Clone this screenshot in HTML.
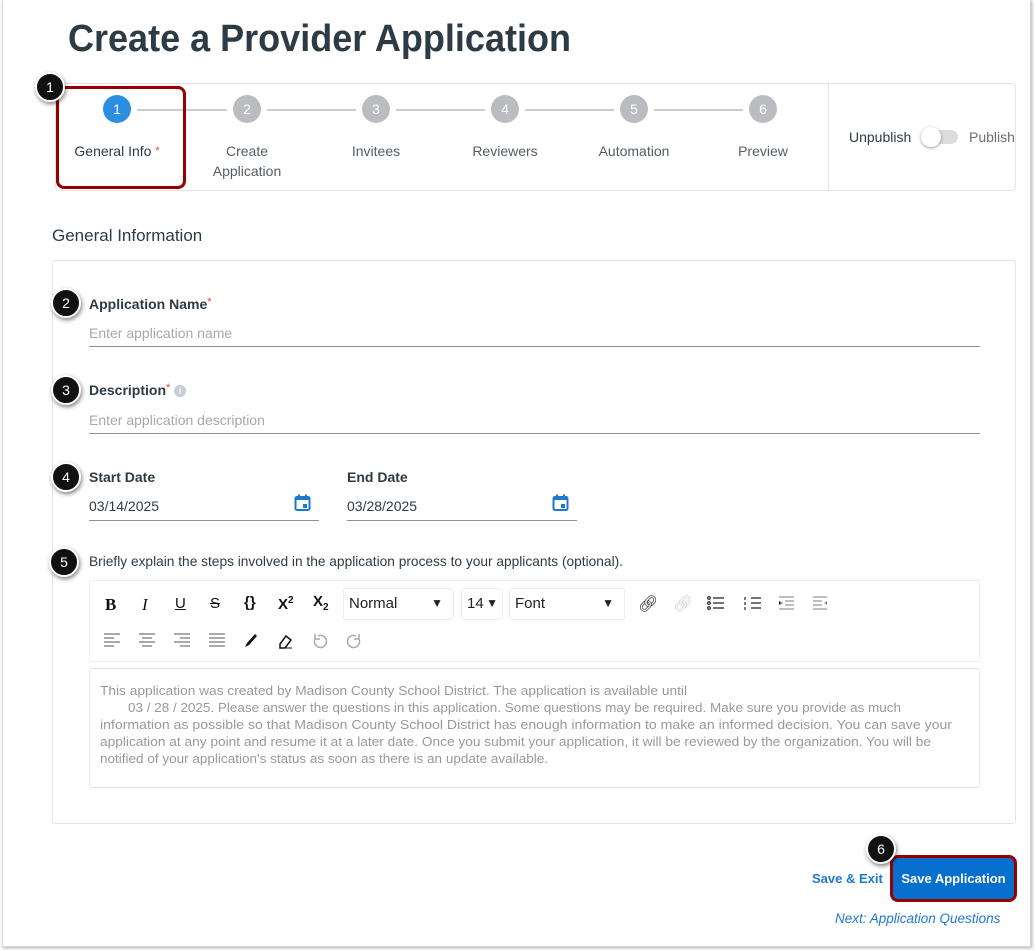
<!DOCTYPE html>
<html><head><meta charset="utf-8"><style>
*{box-sizing:border-box;margin:0;padding:0}
body{width:1036px;height:951px;background:#fff;font-family:"Liberation Sans",sans-serif;color:#2d3b45;position:relative;overflow:hidden}
.a{position:absolute;white-space:nowrap}
.frame{position:absolute;left:2px;top:0;width:1029px;height:947px;border:1px solid #d8d8d8;border-top:none;box-shadow:1px 1px 3px rgba(0,0,0,.35)}
.badge{position:absolute;width:30px;height:30px;border-radius:50%;background:#111;color:#fff;font-size:14px;text-align:center;line-height:26px;border:2px solid #fff;box-shadow:1px 2px 4px rgba(0,0,0,.5)}
.step{position:absolute;top:95px;width:28px;height:28px;border-radius:50%;background:#bbbcc0;color:#fff;font-size:14px;text-align:center;line-height:28px}
.sl{position:absolute;top:141px;font-size:14px;color:#555d63;text-align:center;width:120px;line-height:20px}
.line{position:absolute;top:109px;height:2px;background:#c7cdd1}
.lab{position:absolute;font-size:14px;font-weight:bold;color:#2d3b45}
.ph{position:absolute;font-size:14px;color:#a5a9ad}
.ul{position:absolute;height:1px;background:#8b9196}
.tb{position:absolute;font-size:15px;color:#111}
.sel{position:absolute;top:588px;height:32px;border:1px solid #eee;border-radius:3px;font-size:15px;padding:6px 5px;color:#222}
.sel i{position:absolute;right:10px;top:7px;font-style:normal;font-size:12px}
</style></head><body>
<div class="frame"></div>
<svg class="a" style="left:0;top:0" width="1036" height="70"><text x="68" y="51" font-family="Liberation Sans" font-weight="bold" font-size="38" fill="#2d3b45" textLength="503" lengthAdjust="spacingAndGlyphs">Create a Provider Application</text></svg>

<div class="a" style="left:55px;top:83px;width:961px;height:108px;border:1px solid #e2e4e6;border-radius:4px"></div>
<div class="a" style="left:828px;top:84px;width:1px;height:106px;background:#e2e4e6"></div>
<div class="line" style="left:137px;width:90px"></div>
<div class="line" style="left:267px;width:89px"></div>
<div class="line" style="left:396px;width:89px"></div>
<div class="line" style="left:525px;width:89px"></div>
<div class="line" style="left:654px;width:89px"></div>
<div class="step" style="left:103px;background:#2b8ee0">1</div>
<div class="step" style="left:233px">2</div>
<div class="step" style="left:362px">3</div>
<div class="step" style="left:491px">4</div>
<div class="step" style="left:620px">5</div>
<div class="step" style="left:749px">6</div>
<div class="sl" style="left:57px;color:#2d3b45">General Info <span style="color:#e0472c;font-size:11px;vertical-align:top">*</span></div>
<div class="sl" style="left:187px">Create<br>Application</div>
<div class="sl" style="left:316px">Invitees</div>
<div class="sl" style="left:445px">Reviewers</div>
<div class="sl" style="left:574px">Automation</div>
<div class="sl" style="left:703px">Preview</div>
<div class="a" style="left:56px;top:86px;width:130px;height:103px;border:3px solid #960000;border-radius:8px"></div>
<div class="a" style="left:849px;top:129px;font-size:14px;color:#2d3b45">Unpublish</div>
<div class="a" style="left:924px;top:130px;width:34px;height:14px;border-radius:7px;background:#dcdcdc"></div>
<div class="a" style="left:921px;top:127px;width:20px;height:20px;border-radius:50%;background:#fff;box-shadow:0 1px 3px rgba(0,0,0,.4)"></div>
<div class="a" style="left:969px;top:129px;font-size:14px;color:#6b7075">Publish</div>

<div class="a" style="left:52px;top:226px;font-size:17px;color:#2d3b45">General Information</div>
<div class="a" style="left:52px;top:260px;width:964px;height:564px;border:1px solid #e2e4e6;border-radius:3px"></div>

<div class="lab" style="left:89px;top:296px">Application Name<span style="color:#e0472c;font-weight:normal;font-size:11px;vertical-align:top">*</span></div>
<div class="ph" style="left:89px;top:325px">Enter application name</div>
<div class="ul" style="left:89px;top:346px;width:891px"></div>
<div class="lab" style="left:89px;top:382px">Description<span style="color:#e0472c;font-weight:normal;font-size:11px;vertical-align:top">*</span> <span style="display:inline-block;width:12px;height:12px;border-radius:50%;background:#c7cdd1;color:#fff;font-size:9px;text-align:center;line-height:12px;vertical-align:middle">i</span></div>
<div class="ph" style="left:89px;top:412px">Enter application description</div>
<div class="ul" style="left:89px;top:433px;width:891px"></div>
<div class="lab" style="left:89px;top:469px">Start Date</div>
<div class="lab" style="left:347px;top:469px">End Date</div>
<div class="a" style="left:89px;top:498px;font-size:14px;color:#2d3b45">03/14/2025</div>
<div class="a" style="left:347px;top:498px;font-size:14px;color:#2d3b45">03/28/2025</div>
<svg class="a" style="left:294px;top:494px" width="17" height="17" viewBox="0 0 17 17"><rect x="1.5" y="3" width="14" height="13" rx="1.5" fill="none" stroke="#1e78d2" stroke-width="2"/><rect x="1.5" y="3" width="14" height="3" fill="#1e78d2"/><rect x="4" y="0.5" width="2" height="3" fill="#1e78d2"/><rect x="11" y="0.5" width="2" height="3" fill="#1e78d2"/><rect x="9" y="10" width="4" height="4" fill="#1e78d2"/></svg>
<svg class="a" style="left:552px;top:494px" width="17" height="17" viewBox="0 0 17 17"><rect x="1.5" y="3" width="14" height="13" rx="1.5" fill="none" stroke="#1e78d2" stroke-width="2"/><rect x="1.5" y="3" width="14" height="3" fill="#1e78d2"/><rect x="4" y="0.5" width="2" height="3" fill="#1e78d2"/><rect x="11" y="0.5" width="2" height="3" fill="#1e78d2"/><rect x="9" y="10" width="4" height="4" fill="#1e78d2"/></svg>
<div class="ul" style="left:89px;top:520px;width:230px"></div>
<div class="ul" style="left:347px;top:520px;width:230px"></div>

<svg class="a" style="left:0;top:550px" width="1036" height="20"><text x="89" y="16" font-family="Liberation Sans" font-size="14" fill="#2d3b45" textLength="534" lengthAdjust="spacingAndGlyphs">Briefly explain the steps involved in the application process to your applicants (optional).</text></svg>

<div class="a" style="left:89px;top:580px;width:891px;height:82px;border:1px solid #eceef0;border-radius:2px"></div>
<div class="tb" style="left:105px;top:595px;font-weight:bold;font-family:'Liberation Serif',serif;font-size:17px">B</div>
<div class="tb" style="left:142px;top:595px;font-style:italic;font-family:'Liberation Serif',serif;font-size:17px">I</div>
<div class="tb" style="left:175px;top:595px;text-decoration:underline">U</div>
<div class="tb" style="left:210px;top:595px;text-decoration:line-through">S</div>
<div class="tb" style="left:244px;top:594px;font-weight:bold">{}</div>
<div class="tb" style="left:278px;top:595px;font-weight:bold">X<sup style="font-size:10px">2</sup></div>
<div class="tb" style="left:313px;top:593px;font-weight:bold">X<sub style="font-size:10px">2</sub></div>
<div class="sel" style="left:343px;width:111px">Normal<i>▼</i></div>
<div class="sel" style="left:461px;width:42px">14<i style="right:4px">▼</i></div>
<div class="sel" style="left:509px;width:116px">Font<i>▼</i></div>
<div class="tb" style="left:638px;top:594px;font-size:16px">🔗︎</div>
<div class="tb" style="left:673px;top:594px;font-size:16px;color:#ccc">🔗︎</div>
<svg class="a" style="left:707px;top:596px" width="120" height="16"><g stroke="#222" stroke-width="1.2"><circle cx="2" cy="2" r="1.3" fill="none"/><circle cx="2" cy="7" r="1.3" fill="none"/><circle cx="2" cy="12" r="1.3" fill="none"/><path d="M6 2h11M6 7h11M6 12h11"/><path d="M44 2h10M44 7h10M44 12h10M38 1v3M38 6v3M38 11v3"/></g><g stroke="#999" stroke-width="1.2"><path d="M72 1h15M78 5h9M78 9h9M72 13h15M72 5l3 2-3 2"/><path d="M106 1h15M106 5h9M106 9h9M106 13h15M121 5l-3 2 3 2"/></g></svg>
<svg class="a" style="left:104px;top:632px" width="270" height="18"><g stroke="#777" stroke-width="1.2"><path d="M0 2h16M0 6h10M0 10h16M0 14h10"/><path d="M35 2h16M38 6h10M35 10h16M38 14h10"/><path d="M70 2h16M76 6h10M70 10h16M76 14h10"/><path d="M105 2h16M105 6h16M105 10h16M105 14h16"/></g><path d="M141 15l2-4 8-9 2 2-8 9z" fill="#111"/><path d="M176 12l6-8 5 4-6 8h-5z" fill="none" stroke="#111" stroke-width="1.5"/><path d="M176 16h12" stroke="#111"/><path d="M214 4a6 6 0 1 1-3 3M211 2v5h5" fill="none" stroke="#aaa" stroke-width="1.5"/><path d="M252 4a6 6 0 1 0 3 3M255 2v5h-5" fill="none" stroke="#aaa" stroke-width="1.5"/></svg>

<div class="a" style="left:89px;top:668px;width:891px;height:120px;border:1px solid #e2e4e6;border-radius:3px"></div>
<svg class="a" style="left:90px;top:680px" width="880" height="95" font-family="Liberation Sans" font-size="13" fill="#999">
<text x="10" y="15" textLength="587" lengthAdjust="spacingAndGlyphs">This application was created by Madison County School District. The application is available until</text>
<text x="38" y="32" textLength="773" lengthAdjust="spacingAndGlyphs">03 / 28 / 2025. Please answer the questions in this application. Some questions may be required. Make sure you provide as much</text>
<text x="10" y="49" textLength="852" lengthAdjust="spacingAndGlyphs">information as possible so that Madison County School District has enough information to make an informed decision. You can save your</text>
<text x="10" y="66" textLength="831" lengthAdjust="spacingAndGlyphs">application at any point and resume it at a later date. Once you submit your application, it will be reviewed by the organization. You will be</text>
<text x="10" y="83" textLength="448" lengthAdjust="spacingAndGlyphs">notified of your application's status as soon as there is an update available.</text>
</svg>

<div class="a" style="left:812px;top:871px;font-size:13px;font-weight:bold;color:#1e78d2">Save &amp; Exit</div>
<div class="a" style="left:890px;top:855px;width:127px;height:47px;border:3px solid #960000;border-radius:8px;background:#0770cf;color:#fff;font-weight:bold;font-size:13px;text-align:center;line-height:41px">Save Application</div>
<div class="a" style="left:835px;top:911px;font-size:13.5px;font-style:italic;color:#1e78d2">Next: Application Questions</div>

<div class="badge" style="left:35px;top:72px">1</div>
<div class="badge" style="left:51px;top:288px">2</div>
<div class="badge" style="left:51px;top:375px">3</div>
<div class="badge" style="left:51px;top:462px">4</div>
<div class="badge" style="left:49px;top:547px">5</div>
<div class="badge" style="left:866px;top:834px">6</div>
</body></html>
